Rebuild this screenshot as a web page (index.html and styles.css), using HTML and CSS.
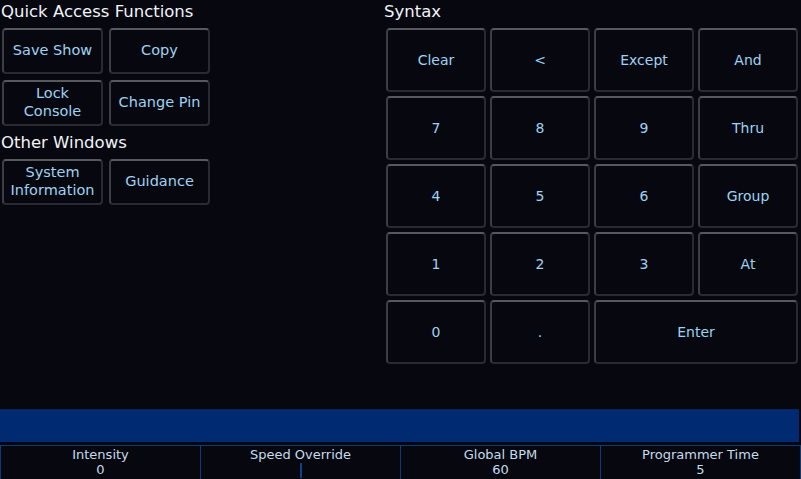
FILE: index.html
```html
<!DOCTYPE html>
<html lang="en">
<head>
  <meta charset="UTF-8">
  <title>Console</title>
  <link rel="stylesheet" href="styles.css">
</head>
<body>
  <div class="main">
    <div class="left">
      <h2>Quick Access Functions</h2>
      <div class="quick">
        <button class="btn">Save Show</button>
        <button class="btn">Copy</button>
        <button class="btn">Lock<br>Console</button>
        <button class="btn">Change Pin</button>
      </div>
      <h2 class="second">Other Windows</h2>
      <div class="quick">
        <button class="btn">System<br>Information</button>
        <button class="btn">Guidance</button>
      </div>
    </div>

    <div class="right">
      <h2>Syntax</h2>
      <div class="keypad">
        <button class="btn">Clear</button>
        <button class="btn">&lt;</button>
        <button class="btn">Except</button>
        <button class="btn">And</button>
        <button class="btn">7</button>
        <button class="btn">8</button>
        <button class="btn">9</button>
        <button class="btn">Thru</button>
        <button class="btn">4</button>
        <button class="btn">5</button>
        <button class="btn">6</button>
        <button class="btn">Group</button>
        <button class="btn">1</button>
        <button class="btn">2</button>
        <button class="btn">3</button>
        <button class="btn">At</button>
        <button class="btn">0</button>
        <button class="btn">.</button>
        <button class="btn wide">Enter</button>
      </div>
    </div>
  </div>

  <div class="cmdline"></div>

  <div class="status">
    <div class="cell">Intensity<span>0</span></div>
    <div class="cell">Speed Override<span class="bar"></span></div>
    <div class="cell">Global BPM<span>60</span></div>
    <div class="cell">Programmer Time<span>5</span></div>
  </div>
</body>
</html>
```

FILE: styles.css
```css
html, body {
  margin: 0;
  padding: 0;
  height: 100%;
}

body {
  background: #06070f;
  color: #ffffff;
  font-family: "DejaVu Sans", "Liberation Sans", sans-serif;
  display: flex;
  flex-direction: column;
  overflow: hidden;
}

h2 {
  margin: 0 0 4px 0;
  font-size: 16.5px;
  font-weight: normal;
  line-height: 24px;
  color: #f2f4f8;
}

.main {
  flex: 1;
  display: flex;
}

.left {
  width: 384px;
}

.left h2 {
  padding-left: 1px;
}

.left h2.second {
  margin-top: 5px;
}

.quick {
  display: grid;
  grid-template-columns: 101px 101px;
  grid-auto-rows: 46px;
  gap: 6px;
  margin-left: 2px;
}

.btn {
  background: #07080f;
  color: #9fd2f2;
  font-family: "DejaVu Sans", "Liberation Sans", sans-serif;
  font-size: 14px;
  line-height: 18px;
  border: 2px solid #2a2b31;
  border-top-color: #58595f;
  border-left-color: #3d3e45;
  border-radius: 4px;
  padding: 0;
}

.quick .btn {
  font-size: 14.5px;
  padding-bottom: 3px;
}

.keypad {
  display: grid;
  grid-template-columns: repeat(4, 100px);
  grid-auto-rows: 64px;
  gap: 4px;
  margin-left: 2px;
}

.keypad .wide {
  grid-column: span 2;
}

.cmdline {
  height: 32px;
  background: #002b73;
  border-top: 1px solid #0b2558;
  margin-right: 2px;
  margin-bottom: 3px;
}

.status {
  display: flex;
  height: 33px;
  border-top: 1px solid #0c3a7c;
}

.cell {
  flex: 1;
  display: flex;
  flex-direction: column;
  align-items: center;
  font-size: 13px;
  line-height: 15px;
  color: #c4dcec;
  border-left: 1px solid #0c3a7c;
  border-right: 1px solid #0c3a7c;
  padding-top: 1px;
}

.cell + .cell {
  border-left: none;
}

.cell span {
  display: block;
}

.cell .bar {
  width: 2px;
  height: 15px;
  margin-top: 1px;
  background: #123f8c;
}
```
